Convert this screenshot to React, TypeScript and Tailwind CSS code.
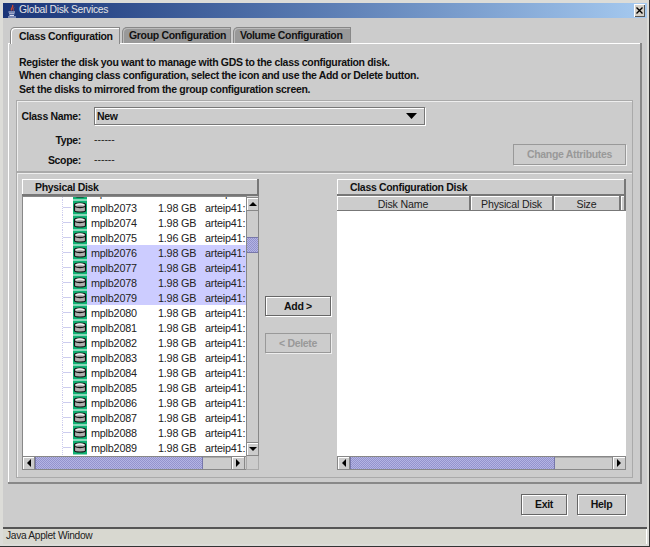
const FONT = "font-['Liberation_Sans',Arial,sans-serif]";
const BOLD = "text-[10.5px] leading-none font-bold tracking-[-0.32px]";
const THUMB =
  "bg-[#a3a3d9] bg-[repeating-conic-gradient(#9393cc_0%_25%,#b4b4e4_0%_50%)] bg-[length:2px_2px]";

const disks = [
  ["mplb2072", "1.98 GB"],
  ["mplb2073", "1.98 GB"],
  ["mplb2074", "1.98 GB"],
  ["mplb2075", "1.96 GB"],
  ["mplb2076", "1.98 GB"],
  ["mplb2077", "1.98 GB"],
  ["mplb2078", "1.98 GB"],
  ["mplb2079", "1.98 GB"],
  ["mplb2080", "1.98 GB"],
  ["mplb2081", "1.98 GB"],
  ["mplb2082", "1.98 GB"],
  ["mplb2083", "1.98 GB"],
  ["mplb2084", "1.98 GB"],
  ["mplb2085", "1.98 GB"],
  ["mplb2086", "1.98 GB"],
  ["mplb2087", "1.98 GB"],
  ["mplb2088", "1.98 GB"],
  ["mplb2089", "1.98 GB"],
];

const selected = ["mplb2076", "mplb2077", "mplb2078", "mplb2079"];

function DiskIcon() {
  return (
    <svg width="14" height="15" viewBox="0 0 14 15" className="shrink-0">
      <rect width="14" height="14" y="0.5" fill="#10b274" />
      <path d="M1.5 4.5C1.5 2.5 12.5 2.5 12.5 4.5V10.5C12.5 12.5 1.5 12.5 1.5 10.5Z" fill="#b0b0b0" stroke="#111" strokeWidth="1.2" />
      <path d="M2 6.5C4 7.8 10 7.8 12 6.5" fill="none" stroke="#111" strokeWidth="1.3" />
      <path d="M3 4.8C5 4 9 4 11 4.8" fill="none" stroke="#f0f0f0" strokeWidth="1.4" />
    </svg>
  );
}

function JavaIcon() {
  return (
    <svg width="12" height="14" viewBox="0 0 12 14" className="shrink-0">
      <path d="M6.5 1C8 3 4.5 4 5.5 6.5" fill="none" stroke="#d84a2a" strokeWidth="1.3" />
      <path d="M8 3.5C7 4.5 7 5 7.5 6.5" fill="none" stroke="#d84a2a" strokeWidth="1" />
      <path d="M2.5 8H9M3 9.8H8.5M3.5 11.5H8M2 13H10" stroke="#d8dcf0" strokeWidth="1" />
    </svg>
  );
}

function Arrow({ dir }: { dir: "up" | "down" | "left" | "right" }) {
  const points = {
    up: "0,5 4,1 8,5",
    down: "0,1 8,1 4,5",
    left: "5,0 5,8 1,4",
    right: "1,0 1,8 5,4",
  }[dir];
  const wide = dir === "up" || dir === "down";
  return (
    <svg width={wide ? 8 : 6} height={wide ? 6 : 8} viewBox={wide ? "0 0 8 6" : "0 0 6 8"}>
      <polygon points={points} fill="#000" />
    </svg>
  );
}

function ScrollButton({ dir, className }: { dir: "up" | "down" | "left" | "right"; className: string }) {
  return (
    <div
      className={`flex shrink-0 items-center justify-center border border-[#888] bg-[#ccc] shadow-[inset_1px_1px_0_#fff] ${className}`}
    >
      <Arrow dir={dir} />
    </div>
  );
}

function HScroll({ thumb, track }: { thumb: string; track: string }) {
  return (
    <div className="flex h-[14px] flex-1 border-y border-[#888] bg-[#ccc]">
      <ScrollButton dir="left" className="w-[13px] border-y-0" />
      <div className={`border-x border-[#7777aa] ${THUMB} ${thumb}`} />
      <div className={`${track} shadow-[inset_0_1px_0_#aaa]`} />
      <ScrollButton dir="right" className="w-[14px] border-y-0" />
    </div>
  );
}

function PanelHeader({ label, indent }: { label: string; indent: string }) {
  return (
    <div
      className={`flex h-[17px] shrink-0 items-center border-r-2 border-b-2 border-[#777] bg-[#ccc] pt-px text-[#111] shadow-[inset_1px_1px_0_#fff] ${BOLD} ${indent}`}
    >
      {label}
    </div>
  );
}

function Tab({ label, width, indent, active }: { label: string; width: string; indent: string; active?: boolean }) {
  return (
    <div
      className={`flex items-center rounded-tl-[5px] border border-b-0 border-[#888] whitespace-nowrap text-[#111] ${BOLD} ${indent} ${width} ${
        active
          ? "relative z-10 h-[17px] bg-[#ccc] shadow-[inset_1px_1px_0_#fff]"
          : "h-[16px] bg-[#999] shadow-[inset_1px_1px_0_#bbb]"
      }`}
    >
      {label}
    </div>
  );
}

function Button({ label, width, disabled }: { label: string; width: string; disabled?: boolean }) {
  return (
    <div
      className={`flex items-center justify-center ${BOLD} ${width} ${
        disabled
          ? "border border-[#999] text-[#999] shadow-[1px_1px_0_#eee]"
          : "border border-[#666] text-[#111] shadow-[inset_1px_1px_0_#fff,1px_1px_0_#fff]"
      }`}
    >
      {label}
    </div>
  );
}

function TableHead({ label, width }: { label: string; width: string }) {
  return (
    <div
      className={`flex items-center justify-center border-r-2 border-b border-[#777] pt-[2px] text-[10.6px] leading-none tracking-[-0.15px] text-[#222] shadow-[inset_1px_1px_0_#fff] ${width}`}
    >
      {label}
    </div>
  );
}

export default function App() {
  return (
    <div
      className={`flex h-[547px] w-[650px] flex-col overflow-hidden bg-[#dcdcd8] px-[3px] pt-[3px] pb-[3px] ${FONT} shadow-[inset_-1px_-1px_0_#333]`}
    >
      {/* title bar */}
      <div className="flex h-[15px] shrink-0 items-center bg-gradient-to-r from-[#1a3478] to-[#a6caf0] pl-[3px] pr-[2px]">
        <JavaIcon />
        <span className="ml-px text-[10.4px] leading-none tracking-[-0.34px] text-[#e4e4e4]">Global Disk Services</span>
        <div className="ml-auto flex h-[13px] w-[11px] items-center justify-center bg-[#d4d0c8] shadow-[inset_1px_1px_0_#fff,inset_-1px_-1px_0_#555]">
          <svg width="7" height="7" viewBox="0 0 7 7">
            <path d="M0.5 0.5L6.5 6.5M6.5 0.5L0.5 6.5" stroke="#000" strokeWidth="1.4" />
          </svg>
        </div>
      </div>

      <div className="flex flex-1 flex-col bg-[#ccc] px-[5px] pt-[9px]">
        {/* tabs */}
        <div className="flex h-[16px] shrink-0 gap-[2px] pl-[2px]">
          <Tab label="Class Configuration" width="w-[110px]" indent="pl-[8px]" active />
          <Tab label="Group Configuration" width="w-[109px]" indent="pl-[6px]" />
          <Tab label="Volume Configuration" width="w-[118px]" indent="pl-[6px]" />
        </div>

        {/* tab content */}
        <div className="h-[441px] shrink-0 border-r-2 border-b-2 border-[#888] px-[8px] pt-[13px] shadow-[inset_1px_1px_0_#fff]">
          <div className="h-[40px] pl-[3px] text-[#111]">
            <p className={`${BOLD} !leading-[13.4px]`}>Register the disk you want to manage with GDS to the class configuration disk.</p>
            <p className={`${BOLD} !leading-[13.4px]`}>When changing class configuration, select the icon and use the Add or Delete button.</p>
            <p className={`${BOLD} !leading-[13.4px]`}>Set the disks to mirrored from the group configuration screen.</p>
          </div>

          {/* class fields */}
          <div className="mt-[4px] h-[72px] w-[617px] border border-[#aaa] pt-[6px] pr-[6px] pl-[4px] shadow-[inset_1px_1px_0_#eee]">
            <div className={`flex items-center gap-[13px] text-[#111] ${BOLD}`}>
              <span className="w-[60px] text-right whitespace-nowrap">Class Name:</span>
              <div className="flex h-[18px] w-[331px] items-center justify-between border border-[#777] pr-[7px] pl-[2px] shadow-[inset_1px_1px_0_#fff,1px_1px_0_#fff]">
                New
                <svg width="11" height="6" viewBox="0 0 11 6">
                  <polygon points="0,0 11,0 5.5,6" fill="#000" />
                </svg>
              </div>
            </div>
            <div className="flex items-end justify-between">
              <div className="pt-[5px]">
                {["Type:", "Scope:"].map((label) => (
                  <div key={label} className="flex h-[20px] items-center gap-[13px]">
                    <span className={`w-[60px] text-right text-[#111] ${BOLD}`}>{label}</span>
                    <span className="text-[10.4px] leading-none text-[#222]">------</span>
                  </div>
                ))}
              </div>
              <Button label="Change Attributes" width="mb-[5px] h-[21px] w-[113px]" disabled />
            </div>
          </div>

          {/* disk lists */}
          <div className="flex h-[306px] w-[617px] border border-[#aaa] pt-[6px] pr-[6px] pl-[5px] shadow-[inset_1px_1px_0_#eee]">
            <div className="flex h-[291px] w-[237px] shrink-0 flex-col">
              <PanelHeader label="Physical Disk" indent="pl-[13px]" />
              <div className="flex h-[260px] shrink-0">
                <div className="h-[260px] w-[224px] overflow-hidden border-t border-l border-[#888] bg-white">
                  <div className="-mt-[12px]">
                    {disks.map(([name, size]) => {
                      const isSelected = selected.includes(name);
                      return (
                        <div
                          key={name}
                          className="flex h-[15px] items-center text-[10.8px] leading-none tracking-[-0.2px] text-[#222]"
                        >
                          <div className="relative h-full w-[50px] shrink-0">
                            <div className="absolute top-0 left-[39px] h-full border-l border-dotted border-[#ccccee]" />
                            <div className="absolute top-[7px] left-[40px] w-[8px] border-t border-[#ccccee]" />
                          </div>
                          <DiskIcon />
                          <div
                            className={`flex h-full flex-1 items-center overflow-hidden pt-px pl-[4px] whitespace-nowrap ${
                              isSelected ? "bg-[#ccccff]" : ""
                            }`}
                          >
                            <span className="w-[67px] shrink-0">{name}</span>
                            <span className="w-[47px] shrink-0">{size}</span>
                            <span>arteip41:</span>
                          </div>
                        </div>
                      );
                    })}
                  </div>
                </div>
                <div className="flex w-[13px] flex-col border-x border-[#888] bg-[#ccc]">
                  <ScrollButton dir="up" className="mt-px h-[14px] border-x-0" />
                  <div className="h-[26px]" />
                  <div className={`h-[16px] border-y border-[#7777aa] ${THUMB}`} />
                  <div className="flex-1" />
                  <ScrollButton dir="down" className="h-[14px] border-x-0" />
                </div>
              </div>
              <div className="flex">
                <HScroll thumb="w-[168px]" track="w-[28px]" />
                <div className="h-[14px] w-[13px] border border-t-0 border-[#aaa]" />
              </div>
            </div>

            <div className="flex w-[78px] shrink-0 flex-col items-center gap-[17px] pt-[117px]">
              <Button label="Add >" width="h-[20px] w-[66px]" />
              <Button label="< Delete" width="h-[20px] w-[66px]" disabled />
            </div>

            <div className="flex h-[291px] w-[289px] shrink-0 flex-col">
              <PanelHeader label="Class Configuration Disk" indent="pl-[13px]" />
              <div className="flex h-[15px] shrink-0 bg-[#ccc]">
                <TableHead label="Disk Name" width="w-[134px]" />
                <TableHead label="Physical Disk" width="w-[83px]" />
                <TableHead label="Size" width="w-[67px]" />
                <TableHead label="" width="flex-1" />
              </div>
              <div className="h-[245px] shrink-0 bg-white" />
              <HScroll thumb="w-[205px]" track="w-[57px]" />
            </div>
          </div>
        </div>

        {/* footer buttons */}
        <div className="flex h-[43px] shrink-0 justify-end gap-[10px] pt-[10px] pr-[16px] pb-[12px]">
          <Button label="Exit" width="w-[46px]" />
          <Button label="Help" width="w-[49px]" />
        </div>
      </div>

      {/* status bar */}
      <div className="flex h-[17px] shrink-0 items-center border-t-2 border-[#555] bg-[#d8d8d0] pl-[3px] text-[10.2px] leading-none tracking-[-0.3px] text-[#222] shadow-[inset_-1px_0_0_#fff]">
        Java Applet Window
      </div>
    </div>
  );
}
